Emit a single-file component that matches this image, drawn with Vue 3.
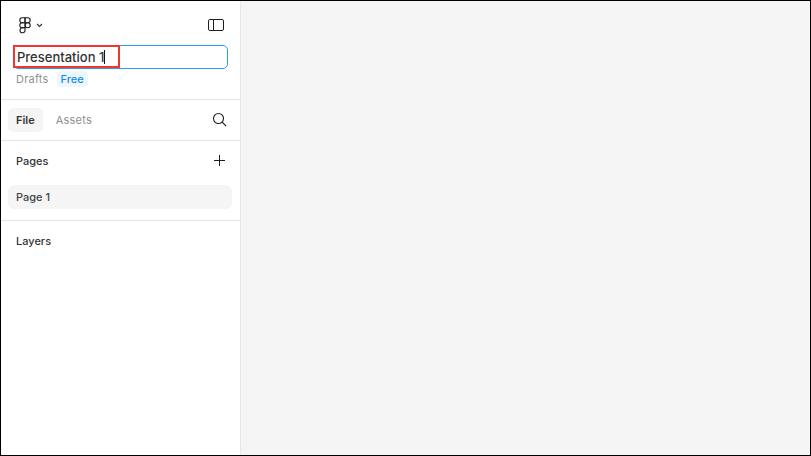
<script setup>
const pages = ['Page 1']
</script>

<template>
  <div class="frame">
    <aside class="sidebar">
      <section class="head">
        <div class="top-row">
          <div class="logo">
            <svg width="12" height="17" viewBox="0 0 12 17" fill="none" stroke="#1e1e1e" stroke-width="1.1">
              <path d="M6 0.8H3.3a2.5 2.5 0 0 0 0 5H6z" />
              <path d="M6 0.8h2.7a2.5 2.5 0 0 1 0 5H6z" />
              <path d="M6 5.8H3.3a2.5 2.5 0 0 0 0 5H6z" />
              <circle cx="8.7" cy="8.3" r="2.5" />
              <path d="M6 10.8H3.3a2.5 2.5 0 1 0 2.7 2.5z" />
            </svg>
            <svg class="chev" width="7" height="5" viewBox="0 0 7 5" fill="none" stroke="#333" stroke-width="1.1">
              <path d="M1 1l2.5 2.5L6 1" />
            </svg>
          </div>
          <svg class="panel-icon" width="16" height="12" viewBox="0 0 16 12" fill="none" stroke="#1e1e1e" stroke-width="1">
            <rect x="0.5" y="0.5" width="15" height="11" rx="1.5" />
            <path d="M5.5 0.5v11" />
          </svg>
        </div>
        <div class="name-wrap">
          <div class="name-input">Presentation 1<span class="caret"></span></div>
          <div class="highlight"></div>
        </div>
        <div class="meta">
          <span class="drafts">Drafts</span>
          <span class="badge">Free</span>
        </div>
      </section>

      <section class="tabs">
        <div class="tab active">File</div>
        <div class="tab">Assets</div>
        <svg class="search" width="15" height="15" viewBox="0 0 15 15" fill="none" stroke="#1e1e1e" stroke-width="1.1">
          <circle cx="6.5" cy="6.5" r="5" />
          <path d="M10.2 10.2l3.8 3.8" />
        </svg>
      </section>

      <section class="pages">
        <div class="section-row">
          <span class="title">Pages</span>
          <svg class="plus" width="11" height="11" viewBox="0 0 11 11" fill="none" stroke="#1e1e1e" stroke-width="1">
            <path d="M5.5 0v11M0 5.5h11" />
          </svg>
        </div>
        <div v-for="page in pages" :key="page" class="page-item">{{ page }}</div>
      </section>

      <section class="layers">
        <span class="title">Layers</span>
      </section>
    </aside>
    <main class="canvas"></main>
  </div>
</template>

<style scoped>
.frame {
  box-sizing: border-box;
  width: 811px;
  height: 456px;
  border: 1px solid #000;
  display: flex;
  background: #f5f5f5;
  font-family: Inter, "Liberation Sans", sans-serif;
  color: #333;
  overflow: hidden;
}
.sidebar {
  box-sizing: border-box;
  width: 240px;
  flex: none;
  background: #fff;
  border-right: 1px solid #e6e6e6;
  display: flex;
  flex-direction: column;
}
.canvas {
  flex: 1;
}
.head {
  box-sizing: border-box;
  height: 99px;
  flex: none;
  padding: 15px 12px 0 12px;
  border-bottom: 1px solid #e6e6e6;
}
.top-row {
  height: 18px;
  display: flex;
  align-items: center;
  justify-content: space-between;
  padding: 0 4px 0 6px;
}
.logo {
  display: flex;
  align-items: center;
  gap: 5px;
}
.name-wrap {
  position: relative;
  margin-top: 11px;
}
.name-input {
  box-sizing: border-box;
  height: 24px;
  border: 1px solid #2f9bef;
  border-radius: 5px;
  padding-left: 3px;
  font-size: 13px;
  font-weight: 500;
  line-height: 22px;
  color: #333;
  white-space: nowrap;
}
.caret {
  display: inline-block;
  width: 1px;
  height: 14px;
  background: #111;
  vertical-align: -2px;
}
.highlight {
  position: absolute;
  left: 0;
  top: 0;
  width: 107px;
  height: 23px;
  box-sizing: border-box;
  border: 2px solid #f0372f;
}
.meta {
  display: flex;
  align-items: center;
  gap: 8px;
  margin-top: 2px;
  padding-left: 3px;
  font-size: 11px;
  line-height: 16px;
}
.drafts {
  color: #8f8f8f;
  letter-spacing: 0.02em;
}
.badge {
  color: #0d8fee;
  background: #eef6fd;
  border-radius: 4px;
  padding: 0 4px;
  font-weight: 500;
}
.tabs {
  box-sizing: border-box;
  height: 41px;
  flex: none;
  display: flex;
  align-items: center;
  padding: 0 13px 0 7px;
  gap: 5px;
  border-bottom: 1px solid #e6e6e6;
  font-size: 11px;
}
.tab {
  height: 24px;
  line-height: 24px;
  padding: 0 8px;
  border-radius: 5px;
  color: #8f8f8f;
  letter-spacing: 0.02em;
}
.tab.active {
  background: #f5f5f5;
  color: #333;
  font-weight: 600;
  letter-spacing: 0;
}
.search {
  margin-left: auto;
  margin-bottom: 2px;
}
.pages {
  box-sizing: border-box;
  height: 80px;
  flex: none;
  padding: 0 8px 0 7px;
  border-bottom: 1px solid #e6e6e6;
}
.section-row {
  height: 40px;
  display: flex;
  align-items: center;
  justify-content: space-between;
  padding: 0 7px 0 8px;
}
.plus {
  margin-bottom: 2px;
}
.title {
  font-size: 11px;
  font-weight: 500;
  color: #333;
}
.page-item {
  margin-top: 4px;
  height: 24px;
  line-height: 24px;
  padding: 0 8px;
  border-radius: 6px;
  background: #f5f5f5;
  font-size: 11px;
  font-weight: 500;
  color: #444;
}
.layers {
  padding: 11px 15px 0;
  line-height: 14px;
}
</style>
